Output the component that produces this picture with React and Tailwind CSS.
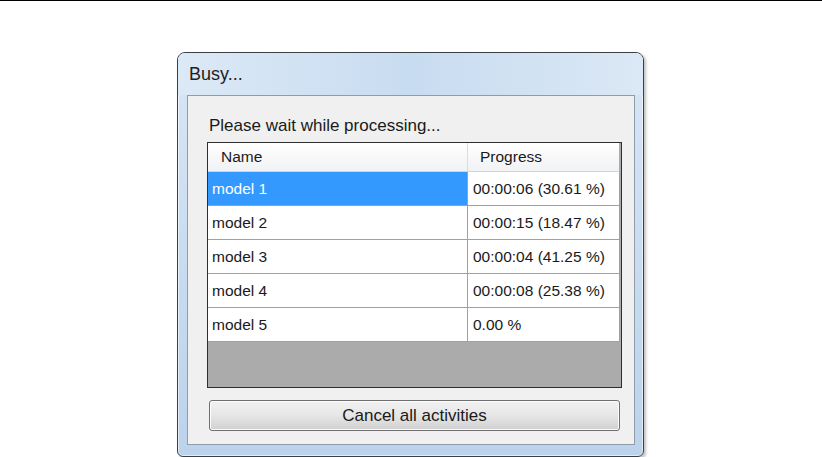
import React from "react";

const rows = [
  ["model 1", "00:00:06 (30.61 %)", true],
  ["model 2", "00:00:15 (18.47 %)", false],
  ["model 3", "00:00:04 (41.25 %)", false],
  ["model 4", "00:00:08 (25.38 %)", false],
  ["model 5", "0.00 %", false],
];

export default function App() {
  return (
    <div
      className="w-[822px] h-[457px] bg-white overflow-hidden border-t border-black text-[#1a1a1a]"
      style={{ fontFamily: '"Liberation Sans", Arial, sans-serif' }}
    >
      <div className="ml-[177px] mt-[51px] w-[467px] h-[405px] rounded-t-[8px] rounded-b-[6px] border border-[#3c3f44] bg-gradient-to-b from-[#d9e7f5] via-[#c9dcf0] to-[#bcd3ec] flex flex-col shadow-[inset_0_0_0_1px_rgba(255,255,255,0.6),2px_2px_3px_rgba(0,0,0,0.25)]">
        <div className="h-[42px] flex items-center pl-[11px] text-[18px] text-[#1e1e1e] bg-gradient-to-r from-[#dce9f6] via-[#c8dcf1] to-[#dbe8f5] rounded-t-[7px]">
          Busy...
        </div>
        <div className="mx-[9px] w-[448px] h-[350px] border border-[#8e9cab] bg-[#f0f0f0] flex flex-col pl-[19px] pr-[13px]">
          <div className="h-[46px] flex items-center pt-[14px] pl-[2px] text-[17px]">
            Please wait while processing...
          </div>
          <div className="w-[415px] h-[246px] border border-[#2e2e2e] bg-[#ababab] flex flex-col">
            <div className="h-[29px] flex border-b border-[#d5d5d5] bg-gradient-to-b from-white to-[#f1f2f4] text-[15.5px] mr-[2px]">
              <div className="w-[260px] flex items-center pl-[13px] border-r border-[#dcdcdc]">Name</div>
              <div className="flex-1 flex items-center pl-[12px]">Progress</div>
            </div>
            {rows.map(([n, p, sel]) => (
              <div key={n} className="h-[34px] flex border-b border-[#a0a0a0] text-[15.5px] mr-[1px] bg-white">
                <div
                  className={
                    sel
                      ? "w-[260px] flex items-center pl-[4px] bg-[#3399ff] text-white border-r border-[#a0a0a0]"
                      : "w-[260px] flex items-center pl-[4px] border-r border-[#a0a0a0]"
                  }
                >
                  {n}
                </div>
                <div className="flex-1 flex items-center pl-[5px] border-r border-[#a0a0a0]">{p}</div>
              </div>
            ))}
          </div>
          <button className="mt-[12px] ml-[2px] w-[411px] h-[31px] rounded-[3px] border border-[#707070] bg-gradient-to-b from-[#f2f2f2] via-[#e6e6e6] to-[#d0d0d0] text-[17px] text-[#1a1a1a] flex items-center justify-center shadow-[inset_0_0_0_1px_#fcfcfc]">
            Cancel all activities
          </button>
        </div>
      </div>
    </div>
  );
}
